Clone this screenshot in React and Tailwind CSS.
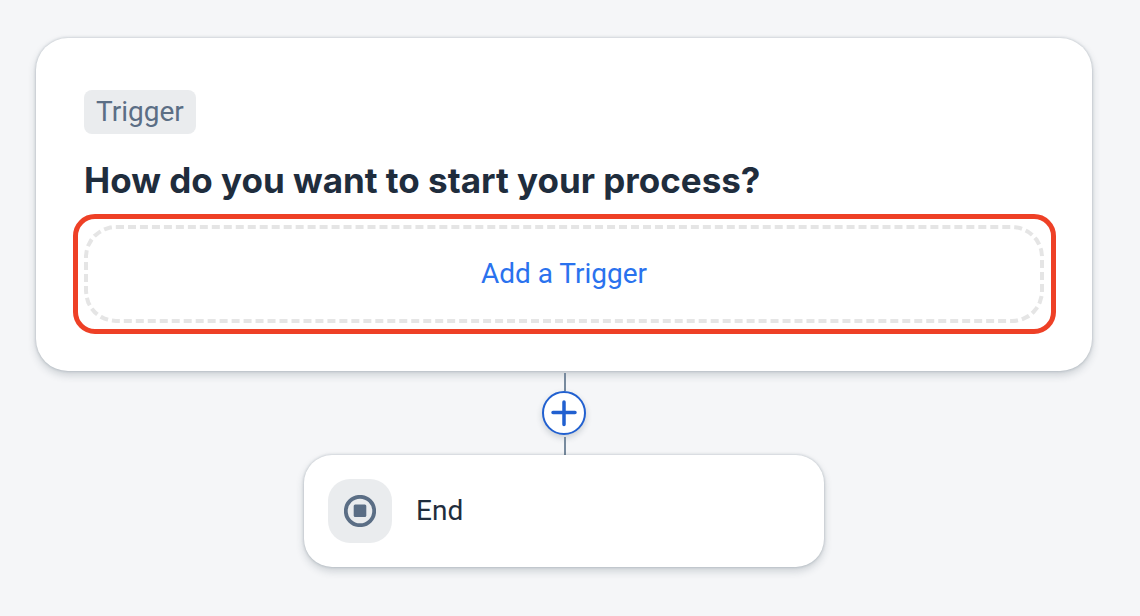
function Connector() {
  return <div className="ml-0.5 h-[18px] w-0.5 bg-[#778a9e]" />;
}

function PlusIcon() {
  return (
    <svg className="size-full" viewBox="0 0 40 40" fill="none" stroke="#2160d0" strokeWidth="3.5" strokeLinecap="round" aria-hidden="true">
      <path d="M20 9v22.600M9 19.500h22" />
    </svg>
  );
}

function StopIcon() {
  return (
    <svg className="size-8" viewBox="0 0 32 32" aria-hidden="true">
      <circle cx="16" cy="16" r="14.200" fill="none" stroke="#5b6e85" strokeWidth="3.800" />
      <rect x="9.700" y="9.500" width="12.600" height="12.600" rx="1.500" fill="#5b6e85" />
    </svg>
  );
}

export default function App() {
  return (
    <main className="min-h-screen bg-[#f5f6f8] pt-[38px] pr-12 pb-12 pl-9 font-['Roboto','Liberation_Sans',sans-serif] text-[28px] leading-[36px] text-[#1f2d3d]">
      <div className="flex flex-col items-center">
        <section className="w-full rounded-[32px] bg-white pt-[52px] pr-9 pb-[37px] pl-[37px] shadow-[0_0_3px_rgba(34,53,72,0.28),0_4px_8px_rgba(34,53,72,0.2)]">
          <header className="flex flex-col items-start gap-6 pl-[11px]">
            <span className="flex h-11 items-center rounded-lg bg-[#eaecee] px-3 text-[#5b6e85]">Trigger</span>
            <h1 className="font-['Inter','Liberation_Sans',sans-serif] text-[35px] leading-[44px] font-bold">How do you want to start your process?</h1>
          </header>
          <div className="mt-3 rounded-[22px] border-[5px] border-[#ee4026] py-1.5 pr-[7px] pl-1.5">
            <button type="button" className="flex h-[98px] w-full items-center justify-center rounded-[32px] border-4 border-dashed border-[#e5e5e5] text-[#2a72ee]">
              Add a Trigger
            </button>
          </div>
        </section>
        <div className="flex flex-col items-center pt-0.5">
          <Connector />
          <button type="button" aria-label="Add a step" className="mb-0.5 size-11 rounded-full border-2 border-[#2160d0] bg-white shadow-[0_3px_6px_rgba(34,53,72,0.2)]">
            <PlusIcon />
          </button>
          <Connector />
        </div>
        <section className="flex w-full max-w-[520px] items-center gap-6 rounded-[28px] bg-white p-6 shadow-[0_0_3px_rgba(34,53,72,0.28),0_4px_8px_rgba(34,53,72,0.2)]">
          <div className="flex size-16 items-center justify-center rounded-[22px] bg-[#eaecee]">
            <StopIcon />
          </div>
          <h2>End</h2>
        </section>
      </div>
    </main>
  );
}
